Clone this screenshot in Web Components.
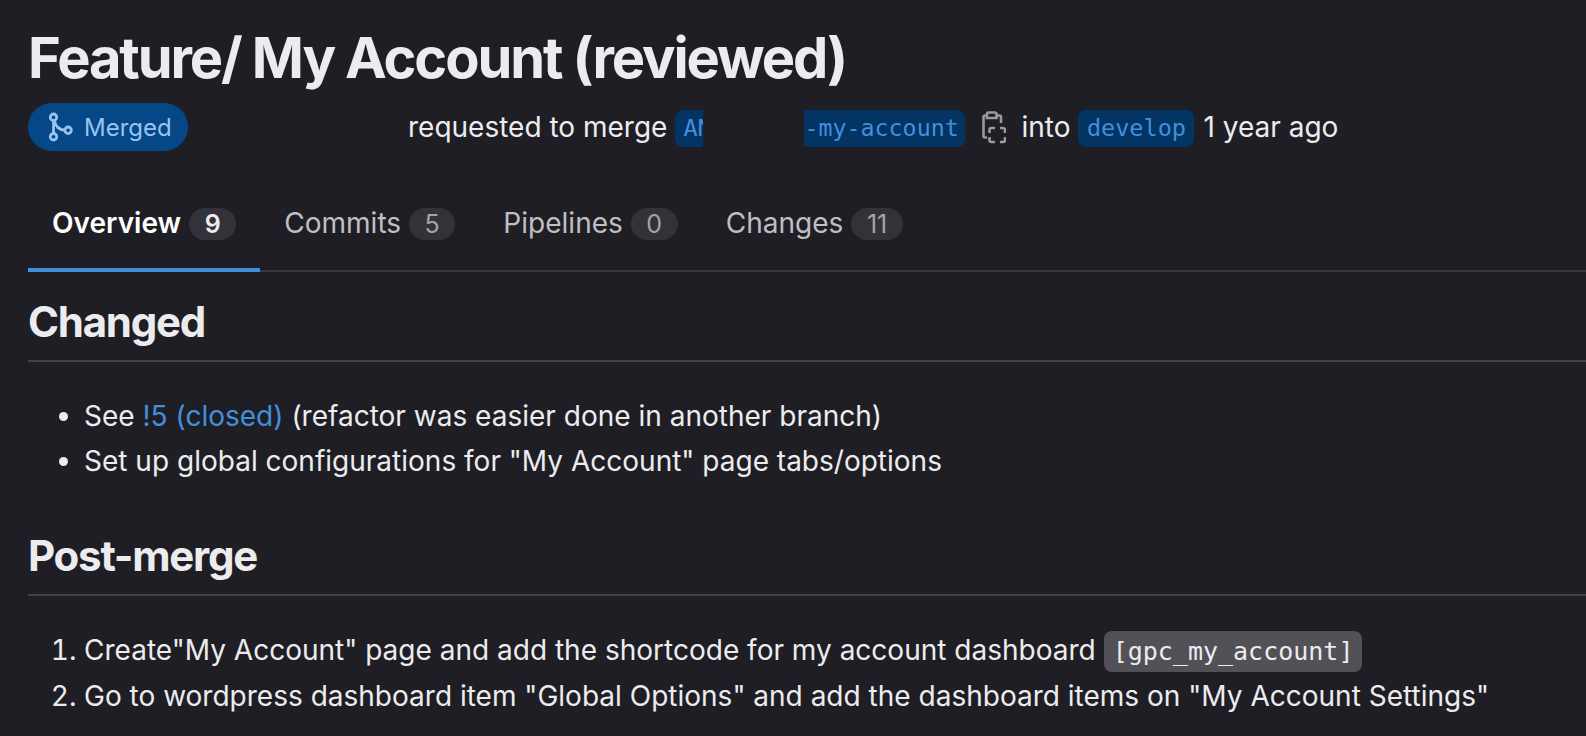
<!DOCTYPE html>
<html>
<head>
<meta charset="utf-8">
<style>
    html, body { margin: 0; background: #1f1e24; height: 736px; overflow: hidden; }
    body { font-family: Inter, 'Liberation Sans', sans-serif; color: #ececef; }
</style>
</head>
<body>
<mr-page>
    <mr-header></mr-header>
    <mr-tabs></mr-tabs>
    <mr-section title="Changed">
        <ul>
            <li>See <a>!5 (closed)</a> (refactor was easier done in another branch)</li>
            <li>Set up global configurations for "My Account" page tabs/options</li>
        </ul>
    </mr-section>
    <mr-section title="Post-merge" class="next">
        <ol>
            <li>Create"My Account" page and add the shortcode for my account dashboard <code>[gpc_my_account]</code></li>
            <li>Go to wordpress dashboard item "Global Options" and add the dashboard items on "My Account Settings"</li>
        </ol>
    </mr-section>
</mr-page>
<script>
// Contenedor de la pagina
class MrPage extends HTMLElement {
    constructor() {
        super();
        this.attachShadow({ mode: 'open' });
    }
    connectedCallback() {
        this.shadowRoot.innerHTML = `
            <style>
                :host { display: block; padding: 0 0 0 28px; box-sizing: border-box; }
            </style>
            <slot></slot>
        `;
    }
}
customElements.define('mr-page', MrPage);

class MrHeader extends HTMLElement {
    constructor() {
        super();
        this.attachShadow({ mode: 'open' });
    }
    connectedCallback() {
        this.shadowRoot.innerHTML = `
            <style>
                :host { display: block; padding-top: 23px; }
                h1 { margin: 0; font-size: 56px; line-height: 70px; font-weight: 650; letter-spacing: -2.12px; color: #ececef; }
                .meta { display: flex; align-items: center; margin-top: 10px; height: 48px; font-size: 28px; color: #ececef; }
                .badge { display: flex; align-items: center; gap: 11px; width: 160px; height: 48px; box-sizing: border-box; padding-left: 19px; border-radius: 24px; background: #064787; color: #97c3f0; font-size: 24px; }
                .who { width: 220px; }
                .ref { display: flex; font-family: 'DejaVu Sans Mono', monospace; font-size: 23.5px; height: 37px; line-height: 36px; margin-top: 2px; color: #428fdc; white-space: nowrap; }
                .branch { margin-left: 8px; }
                .branch span { display: block; overflow: hidden; background: #033464; }
                .branch .head { width: 28px; padding-left: 8px; box-sizing: border-box; border-radius: 8px 0 0 8px; }
                .branch .hole { width: 101px; background: none; }
                .branch .tail { width: 161px; box-sizing: border-box; border-radius: 0 8px 8px 0; font-size: 23.3px; }
                .target { margin: 2px 9px 0 8px; padding: 0 8.5px; border-radius: 8px; background: #033464; }
                .copy { margin: 0 15px 0 16px; display: flex; }
            </style>
            <h1>Feature/ My Account (reviewed)</h1>
            <div class="meta">
                <span class="badge">
                    <svg width="26" height="30" viewBox="0 0 16 18" fill="none" stroke="#97c3f0" stroke-width="1.7">
                        <circle cx="4" cy="3" r="2"/><circle cx="4" cy="15" r="2"/><circle cx="13" cy="11" r="2"/>
                        <path d="M4 5v8M4.600 5.200c.6 3.400 3 5.600 6.400 5.800"/>
                    </svg>
                    Merged
                </span>
                <span class="who"></span>
                <span>requested to merge</span>
                <span class="ref branch"><span class="head">AN</span><span class="hole"></span><span class="tail">-my-account</span></span>
                <span class="copy">
                    <svg width="25" height="34" viewBox="0 0 25 34" fill="none" stroke="#9a99a0" stroke-width="2.600">
                        <path d="M6 5.500H4A1.500 1.500 0 0 0 2.500 7v19A1.500 1.500 0 0 0 4 27.500h2M15.500 5.500H18.500A1.500 1.500 0 0 1 20 7v6"/>
                        <path d="M6 8V4a1.500 1.500 0 0 1 1.500-1.500h6.500A1.500 1.500 0 0 1 15.500 4v4z"/>
                        <path d="M8.500 23v-3A2 2 0 0 1 10.500 18H14M19 18h3A2 2 0 0 1 24 20V23M24 27v3A2 2 0 0 1 22 32H19M14 32h-3.500A2 2 0 0 1 8.500 30V27"/>
                    </svg>
                </span>
                <span>into</span>
                <span class="ref target">develop</span>
                <span>1 year ago</span>
            </div>
        `;
    }
}
customElements.define('mr-header', MrHeader);

class MrTabs extends HTMLElement {
    constructor() {
        super();
        this.attachShadow({ mode: 'open' });
    }
    connectedCallback() {
        const tabs = [['Overview', 9], ['Commits', 5], ['Pipelines', 0], ['Changes', 11]];
        this.shadowRoot.innerHTML = `
            <style>
                :host { display: flex; margin-top: 22px; height: 99px; box-sizing: border-box; border-bottom: 2px solid #3a383f; font-size: 28.05px; color: #bfbfc3; }
                .tab { display: flex; align-items: center; gap: 8px; height: 99px; box-sizing: border-box; padding: 0 24px; }
                .tab.active { color: #fff; font-weight: 600; box-shadow: inset 0 -4px 0 #428fdc; }
                .count { min-width: 32px; height: 32px; line-height: 32px; margin-top: 2px; box-sizing: border-box; padding: 0 15.5px; border-radius: 16px; background: #333238; color: #a4a3a8; font-size: 25px; font-weight: 400; text-align: center; }
                .active .count { color: #ececef; font-weight: 600; }
            </style>
            ${tabs.map((t, i) => `<div class="tab${i === 0 ? ' active' : ''}">${t[0]}<span class="count">${t[1]}</span></div>`).join('')}
        `;
    }
}
customElements.define('mr-tabs', MrTabs);

class MrSection extends HTMLElement {
    constructor() {
        super();
        this.attachShadow({ mode: 'open' });
    }
    connectedCallback() {
        this.shadowRoot.innerHTML = `
            <style>
                :host { display: block; font-size: 28.02px; line-height: 44.8px; color: #ececef; }
                :host(.next) { margin-top: 22px; }
                h2 { margin: 0; height: 90px; line-height: 100px; box-sizing: border-box; border-bottom: 2px solid #434248; font-size: 42px; font-weight: 650; letter-spacing: -1.25px; }
                ::slotted(ul), ::slotted(ol) { margin: 32px 0 0; padding-left: 56px; }
            </style>
            <h2>${this.getAttribute('title')}</h2>
            <slot></slot>
        `;
    }
}
customElements.define('mr-section', MrSection);
</script>
<style>
    mr-section a { color: #428fdc; }
    mr-section code { font-family: 'DejaVu Sans Mono', monospace; font-size: 25px; background: #535158; color: #ececef; padding: 6px 9px; border-radius: 8px; }
</style>
</body>
</html>
